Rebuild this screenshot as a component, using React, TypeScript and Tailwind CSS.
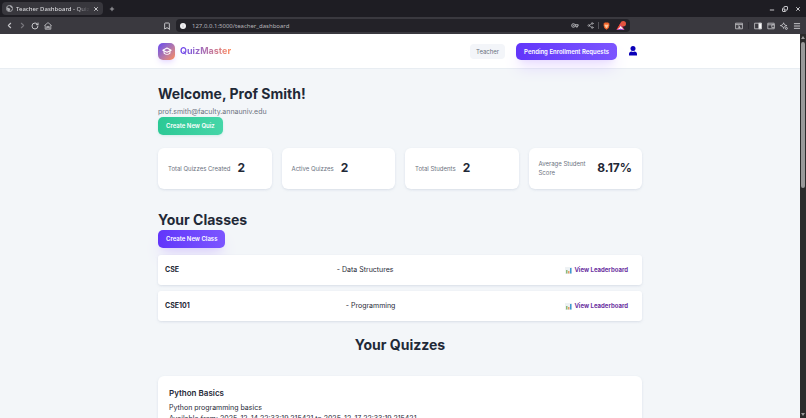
import React from 'react';
import {
  Bookmark,
  ChevronLeft,
  ChevronRight,
  Copy,
  Menu,
  Minus,
  Plus,
  RotateCw,
  Share2,
  X,
} from 'lucide-react';

const stats = [
  { label: 'Total Quizzes Created', value: '2' },
  { label: 'Active Quizzes', value: '2' },
  { label: 'Total Students', value: '2' },
  { label: 'Average Student Score', value: '8.17%' },
];

const classes = [
  { code: 'CSE', title: 'Data Structures' },
  { code: 'CSE101', title: 'Programming' },
];

const GlobeIcon = () => (
  <svg viewBox="0 0 16 16" className="size-[7px] shrink-0" aria-hidden="true">
    <circle cx="8" cy="8" r="7" fill="none" stroke="#b0b0b5" strokeWidth="2" />
    <path d="M2 6c3-1 4 2 7 2 2 1 0 3-1 6-4 0-6-4-6-8zM8 1c0 3 3 2 4 5h3c-1-3-3-5-7-5z" fill="#b0b0b5" />
  </svg>
);

const HomeIcon = () => (
  <svg viewBox="0 0 20 20" className="size-2" fill="none" stroke="currentColor" strokeWidth="2" aria-hidden="true">
    <path d="M1 9 10 1.500 19 9M3 8v10h14V8" />
    <path d="M7 17v-6h6v6M7 14h6" />
  </svg>
);

const KeyIcon = () => (
  <svg viewBox="0 0 20 12" className="h-[5px] w-2" fill="none" stroke="currentColor" strokeWidth="2" aria-hidden="true">
    <circle cx="6" cy="6" r="4.500" />
    <circle cx="6" cy="6" r="1" />
    <path d="M10 4h8v3h-2v3h-3V7h-3" />
  </svg>
);

const BraveIcon = () => (
  <svg viewBox="0 0 16 18" className="h-2 w-[7px]" aria-hidden="true">
    <path d="M4 1h8l1.600 2 1.400.3-.7 2.500.4 2L13 13.500 8 17.500 3 13.500 1.300 7.800l.4-2L1 3.300 2.400 3z" fill="#f4652b" />
    <path d="M4 5.500l3 .4h2l3-.4.8 1.700-2 2.600.3 1.400L8 14l-3.100-2.800.3-1.400-2-2.600z" fill="#ffc99d" />
  </svg>
);

const RewardsIcon = () => (
  <svg viewBox="0 0 20 20" className="size-[10px]" aria-hidden="true">
    <path d="M9 4 17 18H1z" fill="#e0467c" />
    <path d="M9 10 15 17H3z" fill="#fff" />
    <path d="M1 18 9 15l8 3z" fill="#8a3fc0" />
    <path d="M9 4 1 18l7-6z" fill="#f0492e" />
    <circle cx="14.500" cy="5.500" r="5.500" fill="#e5533f" />
  </svg>
);

const ReaderIcon = () => (
  <svg viewBox="0 0 20 20" className="size-2" fill="none" stroke="currentColor" strokeWidth="2" aria-hidden="true">
    <path d="M1.500 3h17v14h-17zM1.500 6.500h17" />
    <path d="M7 10h4v5M7 14.500h7" />
  </svg>
);

const SidebarIcon = () => (
  <svg viewBox="0 0 20 20" className="size-2" fill="none" stroke="currentColor" strokeWidth="2" aria-hidden="true">
    <path d="M1.500 3h17v14h-17z" />
    <path d="M12 3h6.500v14H12z" fill="#fff" />
  </svg>
);

const WalletIcon = () => (
  <svg viewBox="0 0 20 20" className="size-2" fill="none" stroke="currentColor" strokeWidth="2" aria-hidden="true">
    <path d="M18 7V3H2v14h16v-3M2 7h16" />
    <path d="M12 7h7v7h-7z" />
    <path d="M15 10.500h1" />
  </svg>
);

const AssistantIcon = () => (
  <svg viewBox="0 0 20 20" className="size-2" fill="none" stroke="currentColor" strokeWidth="2.500" aria-hidden="true">
    <path d="M9 2c1 4 3 6 8 7-5 1-7 3-8 7-1-4-3-6-8-7 5-1 7-3 8-7z" />
    <circle cx="16" cy="16" r="2.500" />
  </svg>
);

const CapIcon = () => (
  <svg viewBox="0 0 24 24" className="size-[10px]" fill="none" stroke="currentColor" strokeWidth="2.500" aria-hidden="true">
    <path d="M12 5 22 10 12 15 2 10z" strokeLinejoin="round" />
    <path d="M5 12v5c4 4 10 4 14 0v-5" strokeLinecap="round" />
  </svg>
);

const ChartIcon = () => (
  <svg viewBox="0 0 14 14" className="size-[7px]" aria-hidden="true">
    <path d="M0 0h14v14H0z" fill="#eef2f4" />
    <path d="M2 6h3v7H2z" fill="#8fba78" />
    <path d="M6 8h3v5H6z" fill="#e5a068" />
    <path d="M10 2h3v11h-3z" fill="#3f97d2" />
  </svg>
);

const UserIcon = () => (
  <svg viewBox="0 0 16 20" className="h-[10px] w-2" fill="#0a00b8" aria-hidden="true">
    <circle cx="8" cy="5" r="5" />
    <path d="M0 19v-3c0-3 2-5 5-5 2 1 4 1 6 0 3 0 5 2 5 5v3z" />
  </svg>
);

const BrowserChrome = () => (
  <div className="shrink-0 font-['Noto_Sans',sans-serif] text-[#c6c6ca]">
    <div className="flex h-[17px] items-center bg-[#1e1d23] pl-[2px] pr-[5px]">
      <div className="flex h-[13px] w-[101px] items-center gap-[3px] rounded-[4px] bg-[#38373d] px-1">
        <GlobeIcon />
        <span className="min-w-0 flex-1 overflow-hidden whitespace-nowrap bg-linear-to-r from-[#e4e4e8] from-80% to-[#38373d] bg-clip-text text-[6px] font-medium leading-3 text-transparent">
          Teacher Dashboard - Quiz
        </span>
        <button aria-label="Close tab"><X className="size-[6px]" strokeWidth={4} /></button>
      </div>
      <button aria-label="New tab" className="ml-[6px]">
        <Plus className="size-[6px]" strokeWidth={3} />
      </button>
      <div className="ml-auto flex items-center gap-[7px]">
        <button aria-label="Minimise" className="pt-[2px]"><Minus className="size-[6px]" strokeWidth={4} /></button>
        <button aria-label="Restore"><Copy className="size-[6px] -scale-y-100" strokeWidth={4} /></button>
        <button aria-label="Close"><X className="size-[6px]" strokeWidth={4} /></button>
      </div>
    </div>
    <div className="flex h-[17px] items-center bg-[#3a393f] px-[5px]">
      <div className="flex items-center gap-1">
        <button aria-label="Back"><ChevronLeft className="size-[9px]" strokeWidth={3} /></button>
        <button aria-label="Forward"><ChevronRight className="size-[9px] text-[#77767c]" strokeWidth={3} /></button>
        <button aria-label="Reload"><RotateCw className="size-2" strokeWidth={3} /></button>
        <button aria-label="Home" className="ml-px"><HomeIcon /></button>
      </div>
      <div className="flex min-w-0 flex-1 items-center justify-center gap-[5px] pl-[6px]">
        <button aria-label="Bookmark"><Bookmark className="size-2" strokeWidth={3} /></button>
        <div className="flex h-[13px] w-[454px] items-center gap-1 rounded-[4px] bg-[#232228] px-1">
          <svg viewBox="0 0 12 12" className="size-[6px] shrink-0" aria-hidden="true">
            <circle cx="6" cy="6" r="6" fill="#f1f1f3" />
            <path d="M5.500 3h1v1h-1zm0 2h1v4h-1z" fill="#999" />
          </svg>
          <input
            aria-label="Address"
            className="min-w-0 flex-1 bg-transparent pl-[2px] text-[6px] leading-3 text-[#b5b4b9] outline-none"
            defaultValue="127.0.0.1:5000/teacher_dashboard"
          />
          <button aria-label="Passwords" className="mr-1"><KeyIcon /></button>
          <button aria-label="Share"><Share2 className="size-[7px]" /></button>
          <span className="h-[7px] w-px bg-[#55545a]" />
          <button aria-label="Shields"><BraveIcon /></button>
          <button aria-label="Rewards" className="ml-[2px]"><RewardsIcon /></button>
        </div>
      </div>
      <div className="flex items-center gap-[5px]">
        <button aria-label="Reader"><ReaderIcon /></button>
        <span className="h-[7px] w-px bg-[#2d2c32]" />
        <button aria-label="Sidebar"><SidebarIcon /></button>
        <button aria-label="Wallet"><WalletIcon /></button>
        <button aria-label="Assistant"><AssistantIcon /></button>
        <button aria-label="Menu"><Menu className="size-2" strokeWidth={3} /></button>
      </div>
    </div>
  </div>
);

const SiteHeader = () => (
  <header className="shrink-0 border-b border-[#e8edf2] bg-white">
    <div className="mx-auto flex h-[34px] max-w-[484px] items-center">
      <a href="#home" className="flex items-center gap-[5px]">
        <span className="flex size-[17px] items-center justify-center rounded-[5px] bg-linear-to-br from-[#6a3df0] to-[#ff8a4c] text-white shadow-md shadow-violet-500/15">
          <CapIcon />
        </span>
        <span className="bg-linear-to-r from-[#6a3df0] to-[#ff8552] bg-clip-text text-[9px] font-bold leading-3 text-transparent">
          QuizMaster
        </span>
      </a>
      <span className="ml-auto rounded-[4px] bg-[#f3f5f9] px-[6px] py-[3px] text-[6px] leading-[9px] text-[#69727f]">
        Teacher
      </span>
      <button className="ml-[11px] rounded-[5px] bg-linear-to-r from-[#6235fa] to-[#7c55ff] px-2 py-1 text-[6px] font-semibold leading-[9px] text-white shadow-lg shadow-violet-500/20">
        Pending Enrollment Requests
      </button>
      <a href="#profile" aria-label="Profile" className="ml-3 mr-[5px]">
        <UserIcon />
      </a>
    </div>
  </header>
);

const Scrollbar = () => (
  <div className="flex w-[6px] shrink-0 flex-col items-center justify-between bg-[#2b2b2b] py-[2px]" aria-hidden="true">
    <div className="flex h-2/5 w-full flex-col items-center gap-[3px]">
      <svg viewBox="0 0 4 3" className="h-[3px] w-1 shrink-0"><path d="M0 3 2 0l2 3z" fill="#999" /></svg>
      <span className="w-1 flex-1 rounded-full bg-[#999]" />
    </div>
    <svg viewBox="0 0 4 3" className="h-[3px] w-1 shrink-0"><path d="M0 0h4L2 3z" fill="#999" /></svg>
  </div>
);

export default function App() {
  return (
    <div className="flex h-screen flex-col overflow-hidden">
      <BrowserChrome />
      <div className="flex min-h-0 flex-1">
        <div className="flex min-w-0 flex-1 flex-col overflow-hidden bg-[#f3f6f9] font-['Inter',sans-serif] text-[#1f2937]">
          <SiteHeader />
          <main className="mx-auto w-full max-w-[484px] pt-4">
            <h1 className="text-[14px] font-bold leading-[18px]">Welcome, Prof Smith!</h1>
            <p className="mt-1 text-[7px] leading-[9px] text-[#6b7280]">prof.smith@faculty.annauniv.edu</p>
            <button className="mt-px block rounded-[5px] bg-linear-to-r from-[#2bc995] to-[#45d6a8] px-2 py-1 text-[6px] font-semibold leading-[10px] text-white shadow-sm shadow-emerald-500/10">
              Create New Quiz
            </button>

            <div className="mt-[13px] grid grid-cols-4 gap-[10px]">
              {stats.map((stat) => (
                <div key={stat.label} className="flex items-center gap-[7px] rounded-[6px] bg-white px-[10px] pb-3 pt-[11px] shadow-sm shadow-slate-400/20">
                  <span className="text-[6px] leading-[9px] text-[#6b7280]">{stat.label}</span>
                  <span className="text-[12px] font-bold leading-[18px]">{stat.value}</span>
                </div>
              ))}
            </div>

            <h2 className="mt-[22px] text-[14px] font-bold leading-[18px]">Your Classes</h2>
            <button className="mt-px block rounded-[5px] bg-linear-to-r from-[#6235fa] to-[#7c55ff] px-2 py-1 text-[6px] font-semibold leading-[10px] text-white shadow-lg shadow-violet-500/20">
              Create New Class
            </button>
            <ul className="mt-[7px] flex flex-col gap-[6px]">
              {classes.map((item) => (
                <li key={item.code} className="flex items-center justify-between rounded-[3px] bg-white px-[7px] py-[10px] text-[7px] leading-[10px] shadow-sm shadow-slate-400/20">
                  <strong className="font-bold">{item.code}</strong>
                  <span>- {item.title}</span>
                  <a href="#leaderboard" className="flex items-center gap-[2px] pl-[14px] pr-[7px] text-[6px] font-bold text-[#6b2fa0]">
                    <ChartIcon />
                    View Leaderboard
                  </a>
                </li>
              ))}
            </ul>

            <h2 className="mt-[15px] text-center text-[14px] font-bold leading-[18px]">Your Quizzes</h2>
            <article className="mt-[22px] rounded-[6px] bg-white px-[11px] py-3 shadow-sm shadow-slate-400/20">
              <h3 className="text-[8px] font-semibold leading-[10px]">Python Basics</h3>
              <p className="mt-1 text-[7px] leading-[11px]">Python programming basics</p>
              <p className="text-[7px] leading-[11px]">
                Available from: 2025-12-14 22:33:19.215421 to 2025-12-17 22:33:19.215421
              </p>
            </article>
          </main>
        </div>
        <Scrollbar />
      </div>
    </div>
  );
}
